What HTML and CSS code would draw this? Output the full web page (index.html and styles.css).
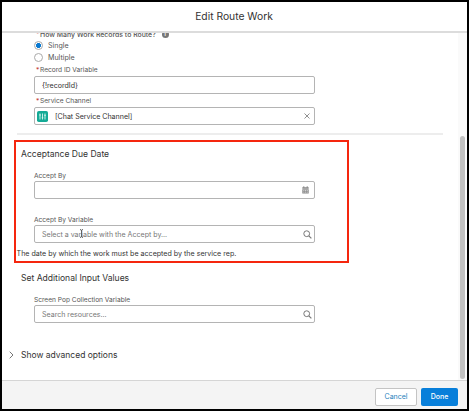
FILE: index.html
```html
<!DOCTYPE html>
<html lang="en">
<head>
<meta charset="utf-8">
<title>Edit Route Work</title>
<link rel="stylesheet" href="styles.css">
</head>
<body>
<main class="modal">
  <header class="modal-header"><h1>Edit Route Work</h1></header>
  <div class="modal-body">
    <div class="content">
      <section class="fields routing">
        <div class="question"><i class="req">*</i><span>How Many Work Records to Route?</span><b class="info">i</b></div>
        <div class="radio"><i class="dot checked"></i><span>Single</span></div>
        <div class="radio"><i class="dot"></i><span>Multiple</span></div>
        <div class="label record"><i class="req">*</i><span>Record ID Variable</span></div>
        <div class="input value"><span class="record-value">{!recordId}</span></div>
        <div class="label channel"><i class="req">*</i><span>Service Channel</span></div>
        <div class="input value pill">
          <svg class="tile" viewBox="0 0 11 11"><rect width="11" height="11" rx="1.8" fill="#14aa96"/><path d="M3 2.5v6M5.5 2.5v6M8 2.5v6M2.2 4h1.6M4.7 6.8h1.6M7.2 4.3h1.6" stroke="#d9f7f1" stroke-width=".9" fill="none"/></svg>
          <span class="channel-value">[Chat Service Channel]</span>
          <svg class="clear" viewBox="0 0 6 6"><path d="M.5.5l5 5M5.5.5l-5 5" stroke="#858585" stroke-width=".9"/></svg>
        </div>
      </section>
      <hr class="divider">
      <section class="highlight">
        <h2 class="due">Acceptance Due Date</h2>
        <div class="fields">
          <div class="label accept"><span>Accept By</span></div>
          <div class="input">
            <svg class="calendar" viewBox="0 0 7 8"><path d="M.3 1.3h6.4v1.5H.3zM1.3.2h1v1.2h-1zM4.7.2h1v1.2h-1zM.3 3.3h6.4v4.2H.3z" fill="#888"/><path d="M1.3 4.4h1.1M3 4.4h1.1M4.7 4.4h1.1M1.3 6.1h1.1M3 6.1h1.1M4.7 6.1h1.1" stroke="#eee" stroke-width=".8"/></svg>
          </div>
          <div class="label accept-variable"><span>Accept By Variable</span></div>
          <div class="input placeholder"><span class="accept-hint">Select a variable with the Accept by...</span>
            <svg class="cursor" viewBox="0 0 5 9"><path d="M1 .7h1l.5.5.5-.5h1M2.5 1v7M1 8.3h1l.5-.5.5.5h1" fill="none" stroke="#555" stroke-width=".9"/></svg>
            <svg class="search" viewBox="0 0 9 9"><circle cx="3.7" cy="3.7" r="2.9" fill="none" stroke="#777" stroke-width="1"/><path d="M5.8 5.8l2.6 2.6" stroke="#777" stroke-width="1.2"/></svg>
          </div>
        </div>
        <p class="help">The date by which the work must be accepted by the service rep.</p>
      </section>
      <section class="additional">
        <h2 class="set">Set Additional Input Values</h2>
        <div class="fields">
          <div class="label screen-pop"><span>Screen Pop Collection Variable</span></div>
          <div class="input placeholder"><span class="resource-hint">Search resources...</span>
            <svg class="search" viewBox="0 0 9 9"><circle cx="3.7" cy="3.7" r="2.9" fill="none" stroke="#777" stroke-width="1"/><path d="M5.8 5.8l2.6 2.6" stroke="#777" stroke-width="1.2"/></svg>
          </div>
        </div>
      </section>
      <div class="advanced">
        <svg class="chevron" viewBox="0 0 5 8"><path d="M.7.7L4 4 .7 7.3" fill="none" stroke="#777" stroke-width="1"/></svg>
        <span>Show advanced options</span>
      </div>
    </div>
    <div class="track"><div class="thumb"></div></div>
  </div>
  <footer class="modal-footer">
    <button class="cancel">Cancel</button>
    <button class="done">Done</button>
  </footer>
</main>
</body>
</html>
```

FILE: styles.css
```css
* { box-sizing: border-box; }
body {
  margin: 0;
  padding: 2px;
  width: 469px;
  height: 411px;
  overflow: hidden;
  background: #000;
  font-family: Inter, "Liberation Sans", sans-serif;
  color: #333;
  white-space: nowrap;
}
h1, h2, p { margin: 0; font-weight: 400; }
i, b { font-style: normal; }
svg { display: block; flex: none; }
.modal { display: flex; flex-direction: column; height: 407px; background: #fff; }
.modal-header {
  flex: none;
  height: 31px;
  display: flex;
  align-items: center;
  justify-content: center;
  padding: 0 1px 1px 0;
  border-bottom: 2px solid #dcdcdc;
}
.modal-header h1 { font-size: 10.3px; line-height: 14px; }
.modal-body { flex: none; height: 347px; display: flex; overflow: hidden; }
.content { width: 456px; height: 347px; overflow: hidden; }
.fields { width: 281px; margin-left: 32px; }
.content > .routing { height: 98px; }
.question {
  display: flex;
  align-items: center;
  height: 12px;
  margin-top: -5px;
  font-size: 6.9px;
  font-weight: 500;
  color: #555;
}
.req { flex: none; width: 6px; padding-left: 2px; color: #c23934; }
.info {
  width: 7px;
  height: 7px;
  margin-left: 6px;
  border-radius: 50%;
  background: #777;
  color: #fff;
  font-size: 5px;
  line-height: 7px;
  text-align: center;
}
.radio { display: flex; align-items: center; height: 11.5px; gap: 5px; font-size: 7.1px; color: #555; }
.dot { width: 9px; height: 9px; border: 1px solid #aaa; border-radius: 50%; }
.checked { background: radial-gradient(circle, #0878d0 0 2.2px, #fff 2.8px); }
.label { display: flex; align-items: center; font-size: 6.6px; line-height: 8px; color: #555; }
.record, .channel { height: 13px; }
.input {
  display: flex;
  align-items: center;
  height: 18px;
  padding-left: 7px;
  border: 1px solid #b4b4b4;
  border-radius: 2px;
  background: #fff;
  font-size: 7.05px;
}
.input .search, .input .calendar, .input .clear { margin-left: auto; }
.input.pill { padding-left: 2px; gap: 7px; }
.tile { width: 11px; height: 11px; }
.clear { width: 6px; height: 6px; margin-right: 4px; }
.calendar { width: 7px; height: 8px; margin-right: 5px; }
.search { width: 9px; height: 9px; margin-right: 2px; }
.placeholder { color: #777; position: relative; }
.cursor { position: absolute; left: 44px; top: 3px; width: 5px; height: 9px; }
.divider { width: 426px; height: 2px; margin: 7px 0 0 15px; border: 0; background: #ededed; }
.highlight {
  width: 335px;
  height: 123px;
  margin: 5px 0 0 12px;
  border: 2px solid #f5260e;
}
h2 { font-size: 8.55px; line-height: 12px; }
.due { margin: 6px 0 0 5px; }
.highlight .fields { margin-left: 18px; }
.accept { height: 10px; margin: 11px 0 0; }
.accept-variable { height: 10px; margin: 16px 0 0; }
.help { margin-left: .6px; font-size: 7.1px; line-height: 9px; margin-top: 6px; }
.set { margin: 9px 0 0 19px; }
.screen-pop { height: 10px; margin: 11px 0 0; }
.advanced { display: flex; align-items: center; height: 14px; margin: 25px 0 0 7px; gap: 7px; font-size: 8.5px; }
.chevron { width: 5px; height: 8px; }
.track { width: 9px; background: #fafafa; padding: 103px 2px 0; }
.thumb { width: 5px; height: 243px; border-radius: 3px; background: #c2c2c2; }
.modal-footer {
  flex: none;
  height: 29px;
  display: flex;
  align-items: center;
  justify-content: flex-end;
  gap: 4px;
  padding: 3px 9px 0 0;
  border-top: 1px solid #d5d5d5;
  background: #f4f4f4;
}
button { height: 18px; padding: 0; border-radius: 2px; font: 7px Inter, sans-serif; }
.cancel { width: 42px; border: 1px solid #c4c4c4; background: #fff; color: #267fbc; }
.done { width: 37px; border: 0; background: #087fda; color: #fff; font-weight: 500; }
```
